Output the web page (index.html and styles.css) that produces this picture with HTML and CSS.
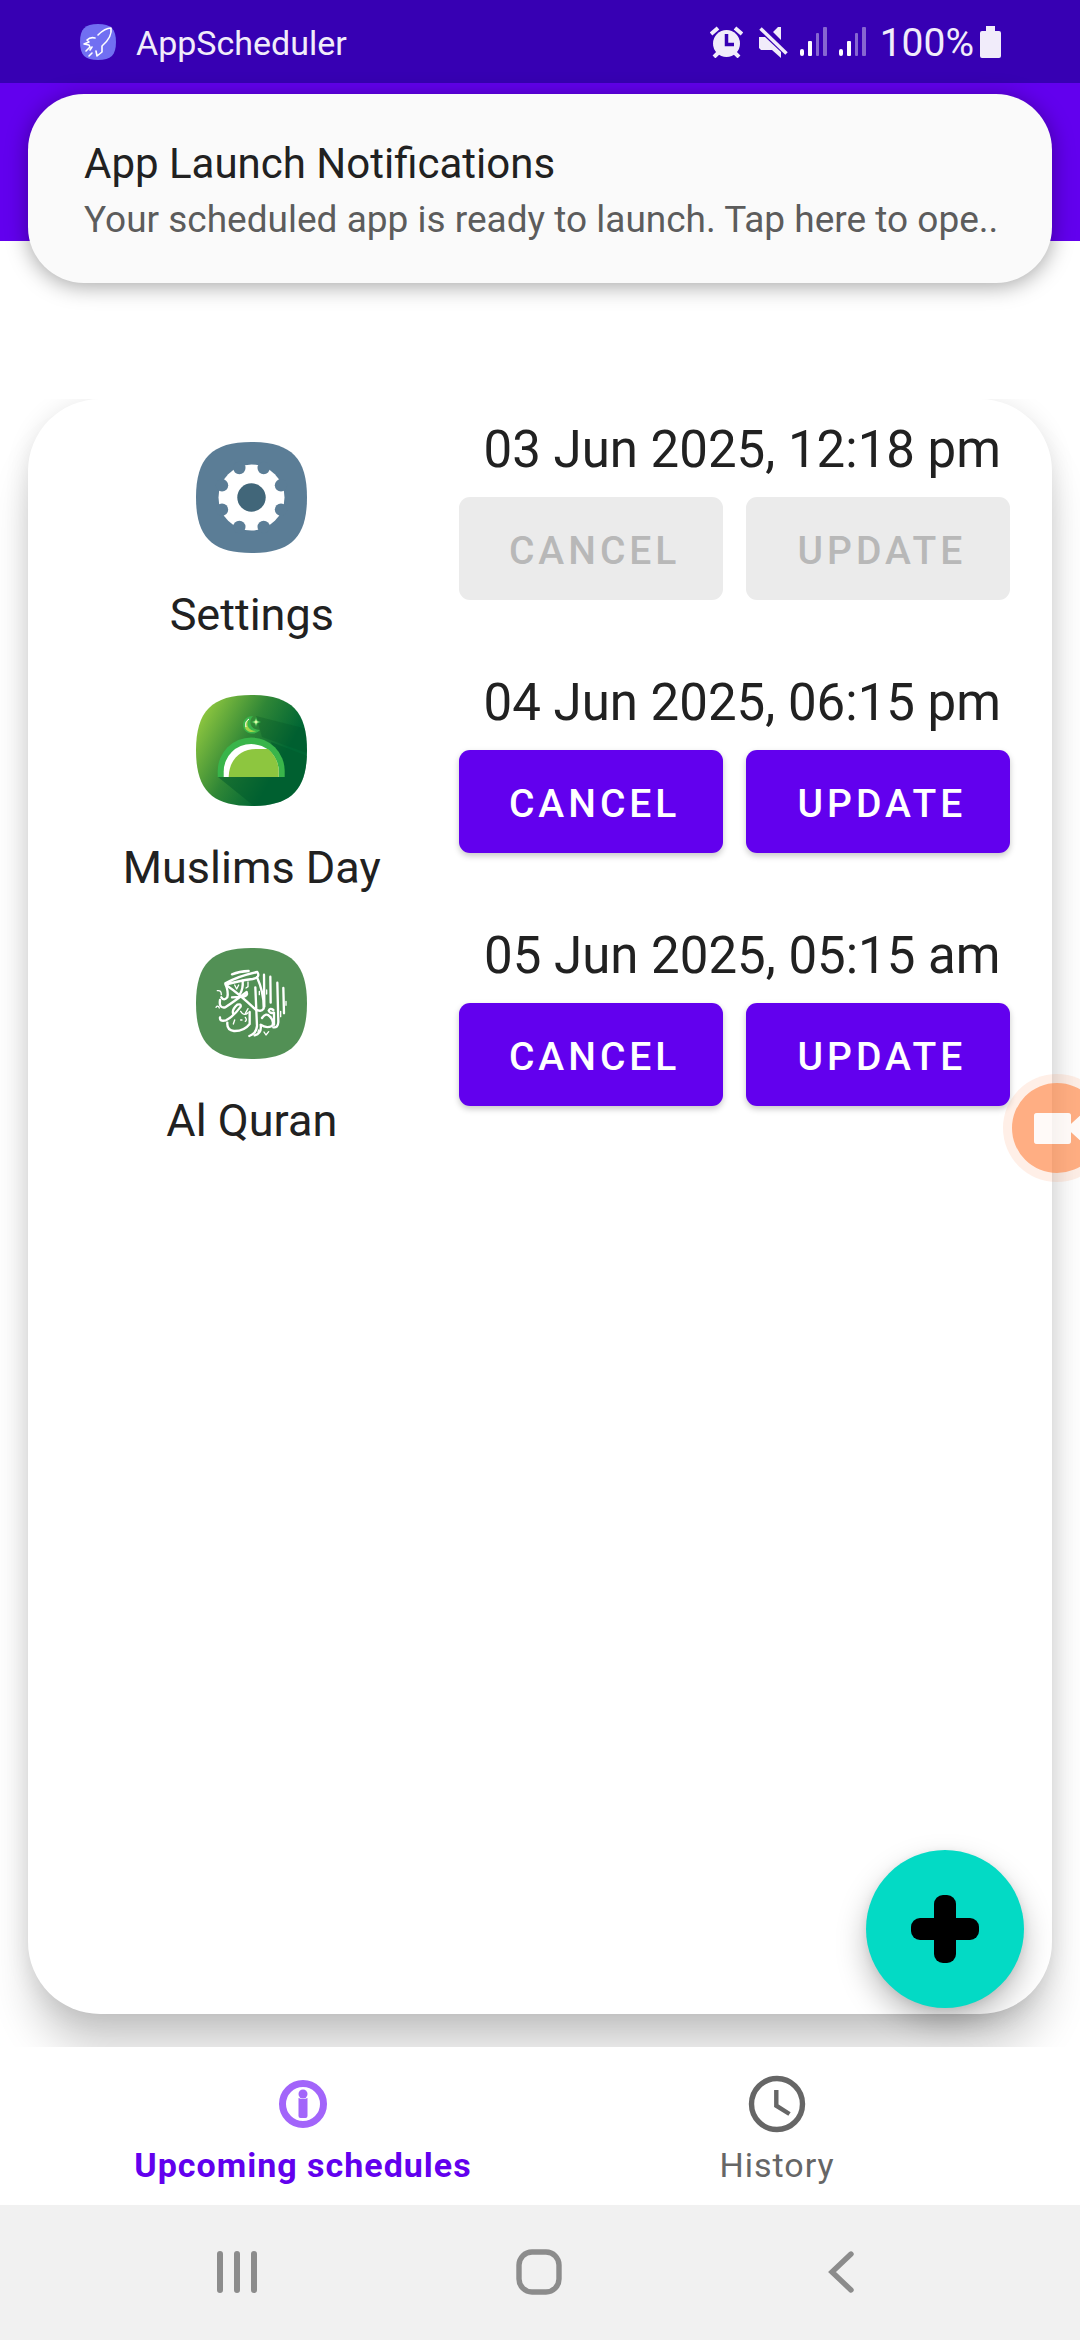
FILE: index.html
```html
<!DOCTYPE html>
<html lang="en">
<head>
<meta charset="utf-8">
<meta name="viewport" content="width=device-width, initial-scale=1">
<title>AppScheduler</title>
<link rel="stylesheet" href="styles.css">
</head>
<body>
<svg class="defs" width="0" height="0" aria-hidden="true">
  <defs>
    <path id="squircle" d="M55.5 0C95 0 111 16 111 55.5S95 111 55.5 111 0 95 0 55.5 16 0 55.5 0Z"/>
    <g id="signal">
      <rect x="0" y="22" width="4" height="7" rx="2" fill="#fff"/>
      <rect x="8" y="14" width="4" height="15" rx="1" fill="#fff"/>
      <rect x="16" y="6" width="3" height="23" rx="1" fill="#fff" opacity=".4"/>
      <rect x="23" y="0" width="4" height="29" rx="1" fill="#fff" opacity=".4"/>
    </g>
  </defs>
</svg>

<header class="status-bar">
  <svg class="status-app-icon" viewBox="0 0 36 36" aria-hidden="true">
    <path fill="#716ff2" d="M18 0C31 0 36 5 36 18S31 36 18 36 0 31 0 18 5 0 18 0Z"/>
    <path fill="none" stroke="#fff" stroke-width="1.600" stroke-linejoin="round" stroke-linecap="round" d="M18 11C22 7 27 4 31 4c1 6-2 12-9 18v6l-5 4-1-5M15 14c-4-1-6 0-8 2l2 2-5 2 5 1 1 2-4 4M12 23l-2 3M12 29l-3 3"/>
  </svg>
  <span class="status-app">AppScheduler</span>
  <div class="status-icons">
    <svg width="33" height="32" viewBox="0 0 33 32" aria-label="Alarm">
      <circle cx="16.500" cy="17.500" r="13.500" fill="#f1ecfa"/>
      <path stroke="#f1ecfa" stroke-width="4" d="M1 8l7-6M32 8l-7-6M4 31l5-5M29 31l-5-5"/>
      <path fill="none" stroke="#3700b3" stroke-width="3.500" d="M16.500 8v10.500H24"/>
    </svg>
    <svg class="mute" width="29" height="32" viewBox="0 0 29 32" aria-label="Muted">
      <path fill="#f1ecfa" d="M0 11h6l16 15v6l-9-8H2l-2-2ZM14 6l5-5h3v13Z"/>
      <path stroke="#f1ecfa" stroke-width="3.500" d="M1.500 2.500l26 25"/>
    </svg>
    <svg class="signal" width="27" height="29"><use href="#signal"/></svg>
    <svg class="signal" width="27" height="29"><use href="#signal"/></svg>
    <span class="battery-level">100%</span>
    <svg width="21" height="32" viewBox="0 0 21 32" aria-label="Battery full">
      <path fill="#f1ecfa" d="M6 0h9v5h4q2 0 2 2v23q0 2-2 2H2q-2 0-2-2V7q0-2 2-2h4Z"/>
    </svg>
  </div>
</header>

<div class="app-bar"></div>

<aside class="notification" role="status">
  <p class="notification-title">App Launch Notifications</p>
  <p class="notification-text">Your scheduled app is ready to launch. Tap here to ope..</p>
</aside>

<main class="content">
  <section class="card">
    <article class="row">
      <div class="app">
        <svg class="app-icon" viewBox="0 0 111 111" aria-hidden="true">
          <use href="#squircle" fill="#5b7d96"/>
          <circle cx="55.500" cy="55.500" r="33" fill="#fff"/>
          <g fill="#5b7d96">
            <circle cx="67.700" cy="26" r="6.200"/><circle cx="85" cy="43.300" r="6.200"/>
            <circle cx="85" cy="67.700" r="6.200"/><circle cx="67.700" cy="85" r="6.200"/>
            <circle cx="43.300" cy="85" r="6.200"/><circle cx="26" cy="67.700" r="6.200"/>
            <circle cx="26" cy="43.300" r="6.200"/><circle cx="43.300" cy="26" r="6.200"/>
          </g>
          <circle cx="55.500" cy="55.500" r="14.200" fill="#416679"/>
        </svg>
        <h2 class="app-name">Settings</h2>
      </div>
      <div class="schedule">
        <time class="date" datetime="2025-06-03T12:18">03 Jun 2025, 12:18 pm</time>
        <div class="actions">
          <button class="button" type="button" disabled>CANCEL</button>
          <button class="button" type="button" disabled>UPDATE</button>
        </div>
      </div>
    </article>

    <article class="row">
      <div class="app">
        <svg class="app-icon" viewBox="0 0 111 111" aria-hidden="true">
          <defs>
            <linearGradient id="leaf" x1="0" y1=".15" x2="1" y2=".7">
              <stop offset=".05" stop-color="#8dc63f"/><stop offset=".45" stop-color="#2f8636"/><stop offset=".78" stop-color="#006634"/>
            </linearGradient>
            <clipPath id="leaf-clip"><use href="#squircle"/></clipPath>
          </defs>
          <use href="#squircle" fill="url(#leaf)"/>
          <g clip-path="url(#leaf-clip)">
            <path fill="#004d25" opacity=".25" d="M60 21L111 34V58L66 42Z"/>
            <path fill="#005a2b" opacity=".5" d="M22 82L58 111H111V61L75 47 86 82Z"/>
          </g>
          <path fill="#39b54a" d="M21.700 82v-6a33.500 33.500 0 0 1 67 0v6Z"/>
          <path fill="#fff" d="M27.700 82v-5.500a27.500 27.500 0 0 1 55 0V82Z"/>
          <path fill="#8dc63f" d="M32.700 82C33 65 44 54 60 54h12c7 6 10.700 14 10.700 22.500V82Z"/>
          <path fill="#39b54a" d="M57 21c-5 5-3 14 7 14-6 7-17 3-17-5 0-6 5-9 10-9Z"/>
          <path fill="#a4d44a" d="M53 24c-4 6 0 12 7 12-6 3-12-1-11-6 0-3 2-5 4-6Z"/>
          <path stroke="#fff" stroke-width="1" d="M50 32c-1-4 0-6 3-8" fill="none"/>
          <path fill="#39b54a" d="M60 22l1.500 3.500L65 27l-3.500 1.500L60 32l-1.500-3.500L55 27l3.500-1.500Z"/>
          <path fill="#e8ffb0" d="M60 24l.8 2.200L63 27l-2.200.8L60 30l-.8-2.200L57 27l2.200-.8Z"/>
        </svg>
        <h2 class="app-name">Muslims Day</h2>
      </div>
      <div class="schedule">
        <time class="date" datetime="2025-06-04T18:15">04 Jun 2025, 06:15 pm</time>
        <div class="actions">
          <button class="button" type="button">CANCEL</button>
          <button class="button" type="button">UPDATE</button>
        </div>
      </div>
    </article>

    <article class="row">
      <div class="app">
        <svg class="app-icon" viewBox="0 0 333 333" aria-hidden="true">
          <use href="#squircle" transform="scale(3)" fill="#529055"/>
          <g transform="translate(-52 -54)" fill="none" stroke="#fff" stroke-linecap="round" stroke-linejoin="round">
            <g stroke-width="7">
              <path d="M160 133Q182 124 210 123M140 160Q180 138 236 126Q246 142 222 147Q176 153 141 164Q180 190 231 239"/>
              <path d="M141 164Q150 186 146 202Q136 214 128 202M124 210Q120 236 140 232Q164 216 204 186Q208 196 196 200L160 202"/>
              <path d="M192 152Q194 176 184 192"/>
              <path d="M124 262Q122 276 142 271Q166 258 186 230Q188 220 176 224Q158 240 164 252"/>
              <path d="M146 278Q144 300 166 303Q196 304 213 282V246"/>
              <path d="M235 142Q256 188 255 236Q248 246 236 240M230 172L235 288Q232 312 212 318"/>
              <path d="M256 134L257 230M275 140L276 218M296 158L299 276Q298 294 284 292"/>
              <path d="M314 174L316 250M250 264Q262 246 274 260Q288 274 280 288Q262 296 246 284Q250 310 228 316"/>
              <path d="M284 240Q274 232 270 242Q274 252 286 248V284"/>
            </g>
            <g stroke-width="4">
              <path d="M168 165l6 12 6-12M208 156v14l-6 4M116 182q12-2 12 12M112 232q6-8 10 2M164 282l4-12M186 270h4M200 262q6 8 0 12M322 214v12M306 244v16M256 306l6 9 8-10M240 300l-2 6M186 244q10 16 22 4M200 250l8-14M264 180v12M242 184v10"/>
            </g>
          </g>
        </svg>
        <h2 class="app-name">Al Quran</h2>
      </div>
      <div class="schedule">
        <time class="date" datetime="2025-06-05T05:15">05 Jun 2025, 05:15 am</time>
        <div class="actions">
          <button class="button" type="button">CANCEL</button>
          <button class="button" type="button">UPDATE</button>
        </div>
      </div>
    </article>
  </section>

  <button class="fab" type="button" aria-label="Add schedule">
    <svg width="68" height="68" viewBox="0 0 68 68" aria-hidden="true">
      <rect x="23" width="22" height="68" rx="9"/><rect y="23" width="68" height="22" rx="9"/>
    </svg>
  </button>
</main>

<div class="recorder">
  <svg width="108" height="108" viewBox="0 0 108 108" aria-label="Screen recorder">
    <circle cx="54" cy="54" r="54" fill="#ff7d37" opacity=".12"/>
    <path fill="#ff7d37" fill-opacity=".57" fill-rule="evenodd" d="M54 9a45 45 0 0 1 0 90 45 45 0 0 1 0-90ZM34 39q-3 0-3 3v25q0 3 3 3h31q3 0 3-3v-9l14 13V37L68 50v-8q0-3-3-3Z"/>
    <path fill="#fff" opacity=".7" d="M34 39q-3 0-3 3v25q0 3 3 3h31q3 0 3-3v-9l14 13V37L68 50v-8q0-3-3-3Z"/>
  </svg>
</div>

<nav class="tabs">
  <a class="tab tab-active" href="#upcoming" aria-current="page">
    <svg class="tab-icon" viewBox="0 0 68 68" aria-hidden="true">
      <circle cx="34" cy="34" r="20.500" fill="none" stroke="#a265fa" stroke-width="7"/>
      <circle cx="34" cy="24" r="4.500" fill="#a265fa"/>
      <path fill="#a265fa" d="M29.500 28q4.500 2 9 0v18q0 2-2 2h-5q-2 0-2-2Z"/>
    </svg>
    Upcoming schedules
  </a>
  <a class="tab" href="#history">
    <svg class="tab-icon" viewBox="0 0 68 68" aria-hidden="true">
      <circle cx="34" cy="34" r="25.500" fill="none" stroke="#666" stroke-width="5.400"/>
      <path fill="none" stroke="#666" stroke-width="4.400" d="M33.300 20v15.700L46.500 44"/>
    </svg>
    History
  </a>
</nav>

<footer class="system-nav">
  <button class="system-button" type="button" aria-label="Recents">
    <svg width="46" height="46" viewBox="0 0 46 46"><path stroke="#8c8c8c" stroke-width="6" stroke-linecap="round" d="M6 5v36M23 5v36M40 5v36"/></svg>
  </button>
  <button class="system-button" type="button" aria-label="Home">
    <svg width="46" height="46" viewBox="0 0 46 46"><rect x="3" y="3" width="40" height="40" rx="13" fill="none" stroke="#8c8c8c" stroke-width="5.400"/></svg>
  </button>
  <button class="system-button" type="button" aria-label="Back">
    <svg width="46" height="46" viewBox="0 0 46 46"><path fill="none" stroke="#8c8c8c" stroke-width="5.400" stroke-linecap="round" d="M33 5L14 23L33 41"/></svg>
  </button>
</footer>
</body>
</html>
```
FILE: styles.css
```css
* {
  box-sizing: border-box;
}

body {
  position: relative;
  display: flex;
  flex-direction: column;
  min-height: 100vh;
  margin: 0;
  overflow-x: hidden;
  background: #fff;
  color: #212121;
  font-family: Roboto, "Noto Sans", sans-serif;
}

svg {
  display: block;
  flex: none;
}

button {
  border: 0;
  padding: 0;
  font-family: inherit;
}

.defs {
  position: absolute;
}

/* Status bar and app bar */
.status-bar {
  display: flex;
  align-items: center;
  height: 83px;
  padding: 0 79px 0 80px;
  background: #3700b3;
  color: #f1ecfa;
}

.status-app-icon {
  width: 36px;
  height: 36px;
}

.status-app {
  margin-left: 20px;
  padding-top: 2px;
  font-size: 34px;
  line-height: 48px;
}

.status-icons {
  display: flex;
  align-items: center;
  margin-left: auto;
}

.mute {
  margin-left: 16px;
}

.signal {
  margin-left: 12px;
}

.battery-level {
  margin: 0 6px 0 14px;
  padding-top: 2px;
  font-size: 39px;
  line-height: 48px;
}

.app-bar {
  height: 158px;
  background: #6200ee;
}

/* Heads-up notification */
.notification {
  position: absolute;
  top: 94px;
  left: 28px;
  right: 28px;
  padding: 42px 48px 35px 56px;
  border-radius: 56px;
  background: #fafafa;
  box-shadow: 0 3px 22px rgba(0, 0, 0, .36);
  white-space: nowrap;
}

.notification-title,
.notification-text {
  margin: 0;
}

.notification-title {
  font-size: 42px;
  line-height: 56px;
}

.notification-text {
  color: #5c5c5c;
  font-size: 37px;
  line-height: 56px;
}

/* Schedule list */
.content {
  position: relative;
  display: flex;
  flex: 1;
  flex-direction: column;
  margin-top: 158px;
  padding: 0 28px 33px;
  overflow: hidden;
}

.card {
  flex: 1;
  border-radius: 72px;
  background: #fff;
  box-shadow: 0 40px 44px -6px rgba(0, 0, 0, .2), 0 2px 24px rgba(0, 0, 0, .1);
}

.row {
  display: grid;
  grid-template-columns: 3fr 4fr;
  padding: 18px 42px 7px 17px;
}

.app {
  display: flex;
  flex-direction: column;
  align-items: center;
  padding-top: 25px;
}

.app-icon {
  width: 111px;
  height: 111px;
}

.app-name {
  margin: 32px 0 0;
  font-size: 45px;
  font-weight: 400;
  line-height: 60px;
}

.date {
  display: block;
  padding-left: 16px;
  font-size: 51px;
  line-height: 66px;
  text-align: center;
  white-space: nowrap;
}

.actions {
  display: grid;
  grid-template-columns: 1fr 1fr;
  gap: 23px;
  margin-top: 14px;
}

.button {
  height: 103px;
  padding: 4px 0 0 8px;
  border-radius: 11px;
  background: #6200ee;
  box-shadow: 0 3px 6px rgba(0, 0, 0, .22);
  color: #fff;
  font-size: 39px;
  font-weight: 500;
  letter-spacing: 4px;
}

.button:disabled {
  background: #ebebeb;
  box-shadow: none;
  color: #b8b8b8;
}

.fab {
  position: absolute;
  right: 56px;
  bottom: 39px;
  display: grid;
  place-items: center;
  width: 158px;
  height: 158px;
  border-radius: 50%;
  background: #03dac5;
  box-shadow: 0 14px 30px rgba(0, 0, 0, .26), 0 2px 8px rgba(0, 0, 0, .08);
}

/* Floating recorder bubble, docked past the right edge */
.recorder {
  position: absolute;
  top: 1074px;
  right: 0;
  width: 77px;
  overflow: hidden;
}

/* Bottom tabs */
.tabs {
  display: flex;
  height: 158px;
  padding: 23px 66px 0;
  background: #fff;
}

.tab {
  display: flex;
  flex: 1;
  flex-direction: column;
  align-items: center;
  color: #666;
  font-size: 34px;
  letter-spacing: 1px;
  line-height: 54px;
  text-decoration: none;
}

.tab-active {
  color: #6200ee;
  font-weight: 700;
}

.tab-icon {
  width: 68px;
  height: 68px;
}

/* System navigation */
.system-nav {
  display: flex;
  height: 135px;
  padding: 0 88px 2px 86px;
  background: #f1f1f1;
}

.system-button {
  display: grid;
  flex: 1;
  place-items: center;
  background: none;
}
```
